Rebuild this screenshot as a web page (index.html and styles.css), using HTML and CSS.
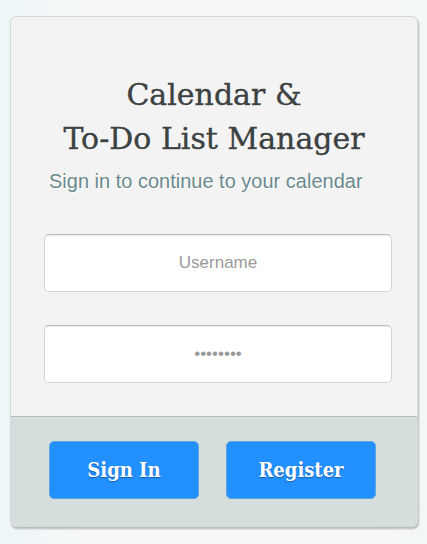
FILE: index.html
```html
<!DOCTYPE html>
<html>
<head>
<meta charset="utf-8">
<link rel="stylesheet" href="styles.css">
</head>
<body>
<div class="card">
  <div class="card-body">
    <h1 class="title">Calendar &amp;<br>To-Do List Manager</h1>
    <p class="subtitle">Sign in to continue to your calendar</p>
    <input class="field" type="text" placeholder="Username">
    <input class="field field-pass" type="password" placeholder="••••••••">
  </div>
  <div class="card-footer">
    <button class="btn">Sign In</button>
    <button class="btn">Register</button>
  </div>
</div>
</body>
</html>
```
FILE: styles.css
```css
html, body {
  margin: 0;
  height: 100%;
}
body {
  background: linear-gradient(90deg, #edf6f9 0%, #f6f8f8 20%, #f6f8f8 80%, #f4f7f8 100%);
  padding: 16px 9px 0 10px;
  box-sizing: border-box;
}
.card {
  width: 408px;
  box-sizing: border-box;
  border: 1px solid #d6d9da;
  border-radius: 6px;
  background: #f3f3f3;
  box-shadow: 1px 2px 2px rgba(0,0,0,0.25);
  overflow: hidden;
}
.card-body {
  padding: 56px 0 33px 33px;
}
.title {
  margin: 0 0 0 -33px;
  text-align: center;
  font-family: "DejaVu Serif", serif;
  font-weight: normal;
  font-size: 30px;
  line-height: 44px;
  color: #3c4242;
  -webkit-text-stroke: 0.4px #3c4242;
  text-shadow: 1px 1px 0 #fff;
}
.subtitle {
  margin: 9px 0 41px 5px;
  font-family: "Liberation Sans", Arial, sans-serif;
  font-size: 20px;
  color: #6b8a8e;
  text-shadow: 1px 1px 0 #fff;
}
.field {
  display: block;
  width: 348px;
  height: 58px;
  box-sizing: border-box;
  border: 1px solid #d4d4d4;
  border-top-color: #bdbdbd;
  border-radius: 5px;
  background: #fff;
  box-shadow: inset 0 1px 1px rgba(0,0,0,0.08);
  text-align: center;
  font-family: "Liberation Sans", Arial, sans-serif;
  font-size: 17px;
  color: #555;
  outline: none;
}
.field::placeholder {
  color: #9a9a9a;
}
.field-pass {
  margin-top: 33px;
  font-size: 17px;
}
.card-footer {
  border-top: 1px solid #b5bdbf;
  background: #d5dddd;
  height: 110px;
  box-sizing: border-box;
  padding: 24px 0 0 38px;
  display: flex;
  gap: 27px;
}
.btn {
  width: 150px;
  height: 58px;
  border: 1px solid #5ba8de;
  border-radius: 5px;
  background: #2290ff;
  color: #fff;
  font-family: "DejaVu Serif Condensed", "DejaVu Serif", serif;
  font-weight: bold;
  font-size: 20px;
  text-shadow: 0 1px 1px rgba(0,0,0,0.35);
  cursor: pointer;
}
```
